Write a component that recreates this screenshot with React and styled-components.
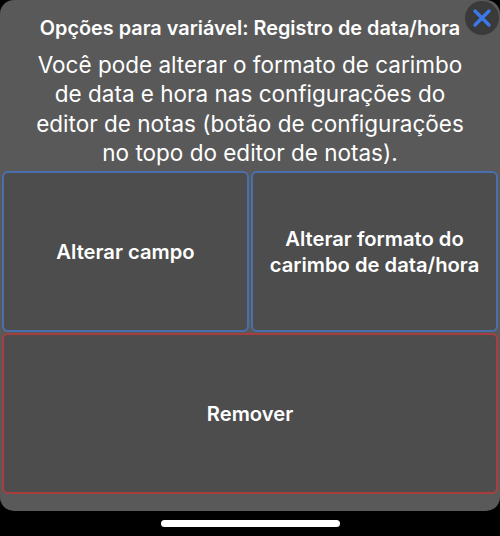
import React from "react";
import styled, { createGlobalStyle } from "styled-components";

const GlobalStyle = createGlobalStyle`
  html, body {
    margin: 0;
    padding: 0;
    background: #000;
  }
  body {
    font-family: Inter, "Liberation Sans", sans-serif;
  }
`;

const Screen = styled.div`
  position: relative;
  width: 500px;
  height: 536px;
  background: #000;
  overflow: hidden;
`;

const Sheet = styled.div`
  height: 511px;
  box-sizing: border-box;
  padding: 15px 2px 0;
  background: #595959;
  border-radius: 14px;
`;

const Title = styled.h1`
  margin: 0 0 9px;
  color: #fff;
  font-size: 19.85px;
  line-height: 26px;
  font-weight: 600;
  white-space: nowrap;
  text-align: center;
`;

const Message = styled.p`
  margin: 0 0 3px;
  color: #fff;
  font-size: 22.5px;
  line-height: 29.4px;
  font-weight: 400;
  text-align: center;
`;

const Options = styled.div`
  display: grid;
  grid-template-columns: 247px 247px;
  grid-template-rows: 161px 161px;
  gap: 1px 2px;
`;

const Option = styled.button`
  grid-column: ${(p) => (p.$wide ? "1 / -1" : "auto")};
  box-sizing: border-box;
  padding: 1px 12px 0;
  background: #4d4d4d;
  border: 2px solid ${(p) => (p.$danger ? "#a83e3e" : "#4a6fae")};
  border-radius: 6px;
  color: #fff;
  font-family: inherit;
  font-size: 20.2px;
  line-height: 26px;
  font-weight: 600;
`;

const CloseButton = styled.button`
  position: absolute;
  top: 1px;
  right: 1px;
  display: flex;
  align-items: center;
  justify-content: center;
  width: 34px;
  height: 34px;
  padding: 0;
  background: #3a3a3a;
  border: none;
  border-radius: 50%;
`;

const HomeIndicator = styled.div`
  position: absolute;
  left: 161px;
  bottom: 9px;
  width: 179px;
  height: 7px;
  background: #fff;
  border-radius: 4px;
`;

export default function App() {
  return (
    <Screen>
      <GlobalStyle />
      <Sheet>
        <Title>Opções para variável: Registro de data/hora</Title>
        <Message>
          Você pode alterar o formato de carimbo
          <br />
          de data e hora nas configurações do
          <br />
          editor de notas (botão de configurações
          <br />
          no topo do editor de notas).
        </Message>
        <Options>
          <Option>Alterar campo</Option>
          <Option>
            Alterar formato do
            <br />
            carimbo de data/hora
          </Option>
          <Option $wide $danger>
            Remover
          </Option>
        </Options>
      </Sheet>
      <CloseButton aria-label="Fechar">
        <svg width="20" height="20" viewBox="0 0 20 20">
          <path
            d="M3 3 L17 17 M17 3 L3 17"
            stroke="#3b78e8"
            strokeWidth="3.4"
            strokeLinecap="round"
            fill="none"
          />
        </svg>
      </CloseButton>
      <HomeIndicator />
    </Screen>
  );
}
